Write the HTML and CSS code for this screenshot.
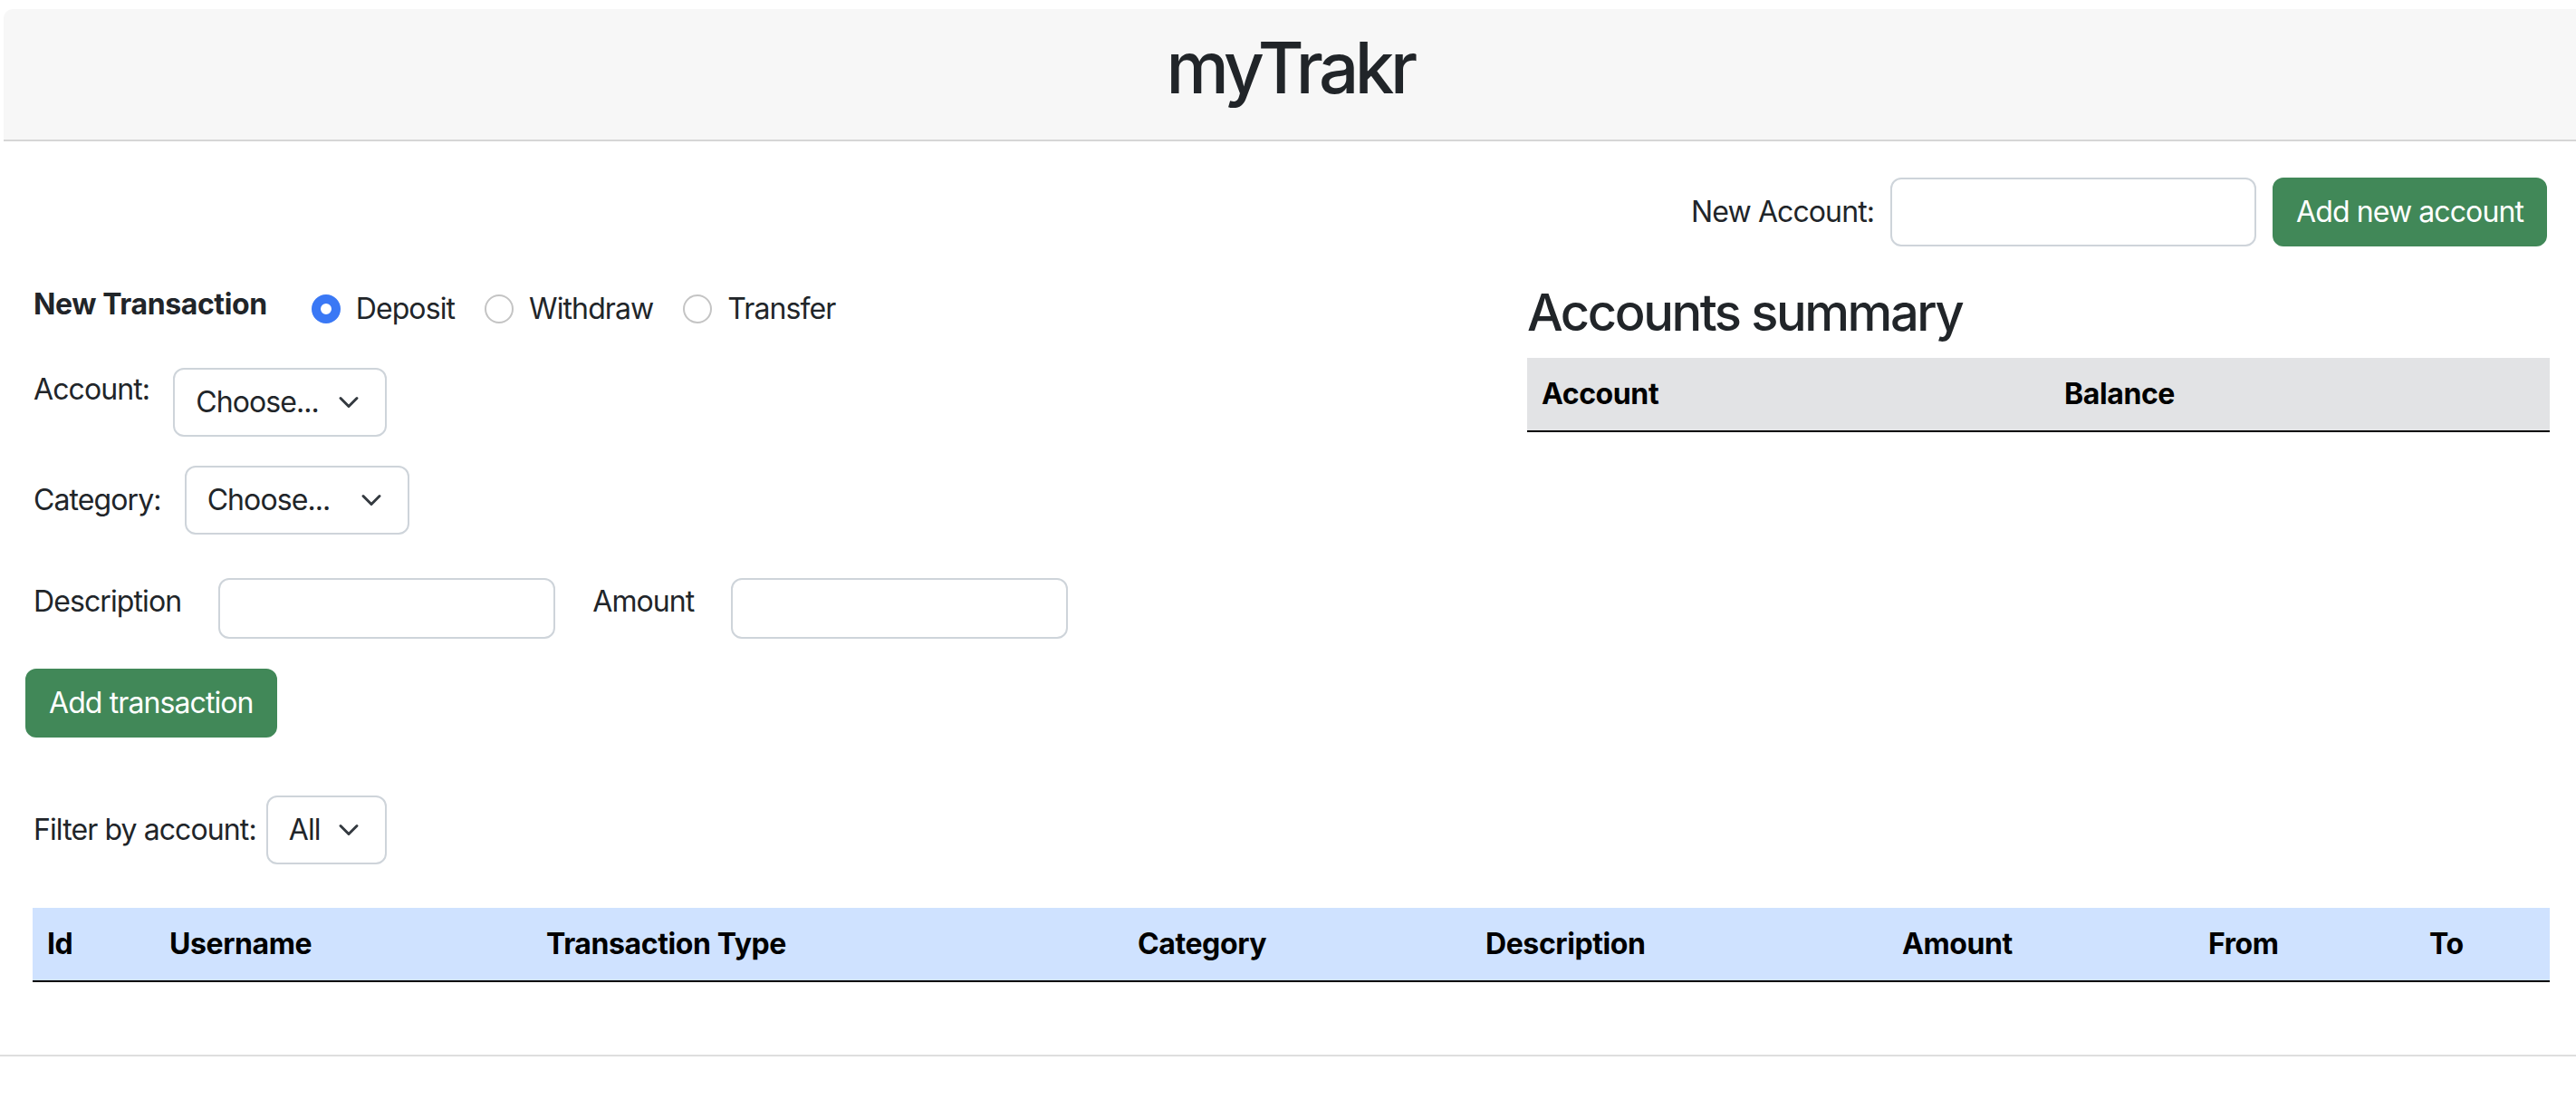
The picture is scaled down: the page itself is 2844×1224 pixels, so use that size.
FILE: index.html
```html
<!DOCTYPE html>
<html lang="en">
<head>
<meta charset="utf-8">
<title>myTrakr</title>
<link rel="stylesheet" href="styles.css">
</head>
<body>
<header class="topbar"><h1>myTrakr</h1></header>

<div class="new-account">
  <label class="na-label">New Account:</label>
  <input class="text-input na-input" type="text">
  <button class="btn">Add new account</button>
</div>

<div class="main">
  <section class="left">
    <div class="txn-type">
      <span class="txn-title">New Transaction</span>
      <div class="radio-item first"><span class="radio checked"></span><span>Deposit</span></div>
      <div class="radio-item"><span class="radio"></span><span>Withdraw</span></div>
      <div class="radio-item"><span class="radio"></span><span>Transfer</span></div>
    </div>

    <div class="form-row account-row">
      <label>Account:</label>
      <div class="select sel-account"><span>Choose...</span><svg class="chev" viewBox="0 0 16 16" width="32" height="24"><path d="m2 5 6 6 6-6" fill="none" stroke="#343a40" stroke-width="2" stroke-linecap="round" stroke-linejoin="round"/></svg></div>
    </div>

    <div class="form-row category-row">
      <label>Category:</label>
      <div class="select sel-category"><span>Choose...</span><svg class="chev" viewBox="0 0 16 16" width="32" height="24"><path d="m2 5 6 6 6-6" fill="none" stroke="#343a40" stroke-width="2" stroke-linecap="round" stroke-linejoin="round"/></svg></div>
    </div>

    <div class="form-row desc-row">
      <label>Description</label>
      <input class="text-input small-input" type="text">
      <label>Amount</label>
      <input class="text-input small-input" type="text">
    </div>

    <button class="btn add-txn">Add transaction</button>

    <div class="filter-row">
      <label>Filter by account:</label>
      <div class="select sel-filter"><span>All</span><svg class="chev" viewBox="0 0 16 16" width="32" height="24"><path d="m2 5 6 6 6-6" fill="none" stroke="#343a40" stroke-width="2" stroke-linecap="round" stroke-linejoin="round"/></svg></div>
    </div>
  </section>

  <section class="right">
    <h3 class="summary-title">Accounts summary</h3>
    <table class="summary-table">
      <thead><tr><th class="c-acc">Account</th><th>Balance</th></tr></thead>
      <tbody></tbody>
    </table>
  </section>
</div>

<table class="txn-table">
  <thead>
    <tr>
      <th class="c-id">Id</th>
      <th class="c-user">Username</th>
      <th class="c-type">Transaction Type</th>
      <th class="c-cat">Category</th>
      <th class="c-desc">Description</th>
      <th class="c-amt">Amount</th>
      <th class="c-from">From</th>
      <th class="c-to">To</th>
    </tr>
  </thead>
  <tbody></tbody>
</table>

<hr class="foot-line">
</body>
</html>
```

FILE: styles.css
```css
* { box-sizing: border-box; }

body {
  margin: 0;
  font-family: Inter, "Noto Sans", "Liberation Sans", sans-serif;
  font-size: 32px;
  line-height: 48px;
  letter-spacing: -0.9px;
  color: #212529;
  background: #fff;
}

.topbar {
  margin: 10px 0 0 4px;
  height: 146px;
  padding-top: 17px;
  background: #f7f7f7;
  border-bottom: 2px solid #d6d6d6;
  border-top-left-radius: 10px;
  text-align: center;
}
.topbar h1 {
  margin: 0;
  font-size: 78px;
  line-height: 96px;
  font-weight: 500;
  letter-spacing: -4.5px;
}

.new-account {
  display: flex;
  justify-content: flex-end;
  align-items: center;
  margin-top: 40px;
  padding-right: 32px;
}
.na-label { margin-right: 18px; }
.na-input { width: 404px; margin-right: 18px; }

.text-input {
  height: 76px;
  padding: 0 24px;
  border: 2px solid #ced4da;
  border-radius: 12px;
  background: #fff;
  font: inherit;
  color: inherit;
}

.btn {
  height: 76px;
  padding: 0 24px;
  border: 2px solid #418858;
  border-radius: 12px;
  background: #418858;
  color: #fff;
  font: inherit;
  line-height: 48px;
  letter-spacing: -0.9px;
}

.main {
  display: flex;
  margin-top: 40px;
}
.left {
  flex: 1;
  padding-left: 28px;
}
.right {
  width: 1129px;
  margin-right: 29px;
}

.txn-type {
  display: flex;
  align-items: flex-start;
  height: 48px;
  margin: 5px 0 0 9px;
}
.txn-title {
  font-weight: 700;
  line-height: 38.4px;
  letter-spacing: -0.4px;
  margin-right: 49px;
}
.radio-item {
  display: flex;
  align-items: center;
  height: 48px;
  gap: 17px;
  margin-right: 33px;
}
.radio {
  width: 32px;
  height: 32px;
  border-radius: 50%;
  border: 2px solid #c4c4c4;
  background: #fff;
}
.radio.checked {
  border: 10px solid #3a78f5;
}

.form-row {
  display: flex;
  align-items: flex-start;
  margin-left: 9px;
}
.account-row { margin-top: 41px; gap: 26px; }
.category-row { margin-top: 32px; gap: 26px; align-items: center; }
.desc-row { margin-top: 48px; gap: 41px; }
.desc-row label { margin-top: 2px; }
.small-input { width: 372px; height: 67px; }

.select {
  display: flex;
  align-items: center;
  justify-content: space-between;
  height: 76px;
  padding: 0 24px 0 23px;
  border: 2px solid #ced4da;
  border-radius: 12px;
  background: #fff;
}
.sel-account { width: 236px; }
.sel-category { width: 248px; }
.sel-filter { width: 133px; }
.chev { display: block; }

.add-txn { margin-top: 33px; }

.filter-row {
  display: flex;
  align-items: center;
  gap: 11px;
  margin: 64px 0 0 9px;
}

.summary-title {
  margin: 0 0 16px;
  font-size: 56px;
  line-height: 67px;
  font-weight: 500;
  letter-spacing: -2.4px;
}

table {
  border-collapse: collapse;
}
th {
  padding: 16px;
  line-height: 48px;
  text-align: left;
  font-weight: 700;
  letter-spacing: -0.4px;
  color: #000;
  border-bottom: 2px solid #000;
}

.summary-table { width: 100%; }
.summary-table th { background: #e2e3e5; }
.c-acc { width: 577px; }

.txn-table {
  width: 2779px;
  margin: 48px 0 0 36px;
}
.txn-table th { background: #cfe2ff; }
.c-id { width: 135px; }
.c-user { width: 416px; }
.c-type { width: 653px; }
.c-cat { width: 384px; }
.c-desc { width: 460px; }
.c-amt { width: 338px; }
.c-from { width: 244px; }
.c-to { width: 149px; }

.foot-line {
  margin: 80px 0 0;
  border: 0;
  border-top: 2px solid #dedede;
}
```
